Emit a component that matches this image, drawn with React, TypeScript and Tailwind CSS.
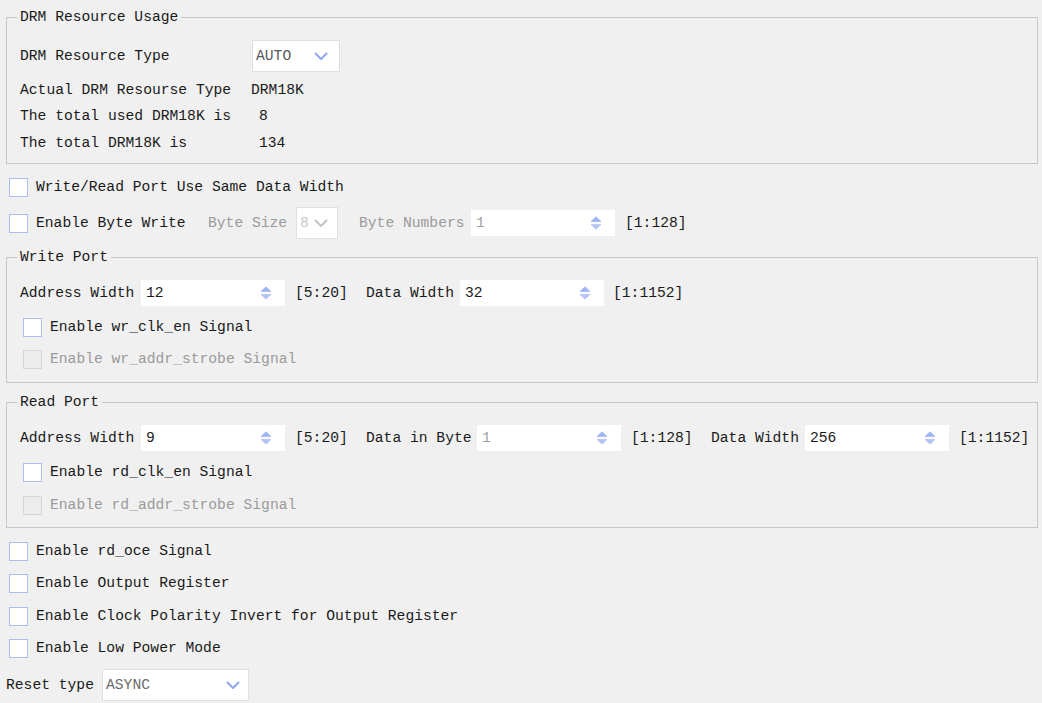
import React from "react";

const FONT = { fontFamily: '"Liberation Mono", "Courier New", monospace' };

function Checkbox({ disabled = false }: { disabled?: boolean }) {
  return (
    <div
      className={
        disabled
          ? "w-[19px] h-[19px] shrink-0 border border-[#d6d6d6] bg-[#ececec]"
          : "w-[19px] h-[19px] shrink-0 border-[1.5px] border-[#a9bef6] bg-white"
      }
    />
  );
}

function Chevron({ light = false }: { light?: boolean }) {
  return (
    <svg width="14" height="9" viewBox="0 0 14 9" className="shrink-0">
      <path
        d="M1.5 1.5 L7 7 L12.5 1.5"
        fill="none"
        stroke={light ? "#c4c4c4" : "#8ea7ee"}
        strokeWidth="2"
        strokeLinecap="round"
        strokeLinejoin="round"
      />
    </svg>
  );
}

function Spin({ value, disabled = false, w = "w-[144px]" }: { value: string; disabled?: boolean; w?: string }) {
  return (
    <div className={`${w} h-[26px] bg-white flex items-center pl-[5px] pr-[13px] shrink-0`}>
      <span className={disabled ? "flex-1 text-[#a0a0a0]" : "flex-1 text-[#1a1a1a]"}>{value}</span>
      <svg width="12" height="14" viewBox="0 0 12 14" className="shrink-0">
        <path d="M6 0.8 L11 5.6 L1 5.6 Z" fill="#9fb4f2" strokeLinejoin="round" stroke="#9fb4f2" strokeWidth="0.8" />
        <path d="M1 8.4 L11 8.4 L6 13.2 Z" fill="#b3c3f4" strokeLinejoin="round" stroke="#b3c3f4" strokeWidth="0.8" />
      </svg>
    </div>
  );
}

function Combo({ value, w, textCls, light = false, pr = "pr-[11px]" }: { value: string; w: string; textCls: string; light?: boolean; pr?: string }) {
  return (
    <div className={`${w} h-[32px] bg-white border border-[#e0e0e0] flex items-center pl-[3px] ${pr} shrink-0`}>
      <span className={`flex-1 ${textCls}`}>{value}</span>
      <Chevron light={light} />
    </div>
  );
}

function Group({ title, children, mt }: { title: string; children: React.ReactNode; mt: string }) {
  return (
    <fieldset className={`${mt} ml-[6px] w-[1032px] border border-[#c8c8c8] p-0 m-0`}>
      <legend className="ml-[10px] px-[3px] leading-[18px] text-[#1a1a1a]">{title}</legend>
      {children}
    </fieldset>
  );
}

function CheckRow({ label, disabled = false, mt, inset = false }: { label: string; disabled?: boolean; mt: string; inset?: boolean }) {
  return (
    <div className={`${mt} h-[26px] flex items-center ${inset ? "ml-[3px]" : "ml-[9px]"}`}>
      <Checkbox disabled={disabled} />
      <span className={`ml-[8px] ${disabled ? "text-[#9a9a9a]" : "text-[#1a1a1a]"}`}>{label}</span>
    </div>
  );
}

export default function App() {
  return (
    <div
      className="w-[1042px] h-[703px] bg-[#f0f0f0] overflow-hidden text-[14.67px] leading-[18px] text-[#1a1a1a] flex flex-col"
      style={FONT}
    >
      <Group title="DRM Resource Usage" mt="mt-[8px]">
        <div className="pl-[13px] pt-[14px] pb-[7px]">
          <div className="h-[32px] flex items-center">
            <span className="w-[232px]">DRM Resource Type</span>
            <Combo value="AUTO" w="w-[88px]" textCls="text-[#5a5a5a]" />
          </div>
          <div className="mt-[5px] h-[26px] flex items-center">
            <span className="w-[231px]">Actual DRM Resourse Type</span>
            <span>DRM18K</span>
          </div>
          <div className="h-[26px] flex items-center">
            <span className="w-[239px]">The total used DRM18K is</span>
            <span>8</span>
          </div>
          <div className="h-[27px] flex items-center">
            <span className="w-[239px]">The total DRM18K is</span>
            <span>134</span>
          </div>
        </div>
      </Group>

      <CheckRow label="Write/Read Port Use Same Data Width" mt="mt-[10px]" />

      <div className="mt-[7px] h-[32px] flex items-center ml-[9px]">
        <Checkbox />
        <span className="ml-[8px] w-[172px]">Enable Byte Write</span>
        <span className="text-[#9a9a9a] w-[88px]">Byte Size</span>
        <Combo value="8" w="w-[42px]" textCls="text-[#c8c8c8]" light pr="pr-[9px]" />
        <span className="ml-[21px] w-[112px] text-[#9a9a9a]">Byte Numbers</span>
        <Spin value="1" disabled />
        <span className="ml-[10px]">[1:128]</span>
      </div>

      <Group title="Write Port" mt="mt-[9px]">
        <div className="pl-[13px] pt-[14px] pb-[10px]">
          <div className="h-[26px] flex items-center">
            <span className="w-[121px]">Address Width</span>
            <Spin value="12" />
            <span className="ml-[10px] w-[71px]">[5:20]</span>
            <span className="w-[94px]">Data Width</span>
            <Spin value="32" />
            <span className="ml-[9px]">[1:1152]</span>
          </div>
          <CheckRow label="Enable wr_clk_en Signal" mt="mt-[8px]" inset />
          <CheckRow label="Enable wr_addr_strobe Signal" mt="mt-[6px]" inset disabled />
        </div>
      </Group>

      <Group title="Read Port" mt="mt-[10px]">
        <div className="pl-[13px] pt-[14px] pb-[9px]">
          <div className="h-[26px] flex items-center">
            <span className="w-[121px]">Address Width</span>
            <Spin value="9" />
            <span className="ml-[10px] w-[71px]">[5:20]</span>
            <span className="w-[111px]">Data in Byte</span>
            <Spin value="1" disabled />
            <span className="ml-[10px] w-[80px]">[1:128]</span>
            <span className="w-[94px]">Data Width</span>
            <Spin value="256" />
            <span className="ml-[10px]">[1:1152]</span>
          </div>
          <CheckRow label="Enable rd_clk_en Signal" mt="mt-[8px]" inset />
          <CheckRow label="Enable rd_addr_strobe Signal" mt="mt-[7px]" inset disabled />
        </div>
      </Group>

      <CheckRow label="Enable rd_oce Signal" mt="mt-[10px]" />
      <CheckRow label="Enable Output Register" mt="mt-[6px]" />
      <CheckRow label="Enable Clock Polarity Invert for Output Register" mt="mt-[7px]" />
      <CheckRow label="Enable Low Power Mode" mt="mt-[6px]" />

      <div className="mt-[8px] h-[32px] flex items-center ml-[6px]">
        <span className="w-[96px]">Reset type</span>
        <Combo value="ASYNC" w="w-[147px]" textCls="text-[#6a6a6a]" pr="pr-[8px]" />
      </div>
    </div>
  );
}
